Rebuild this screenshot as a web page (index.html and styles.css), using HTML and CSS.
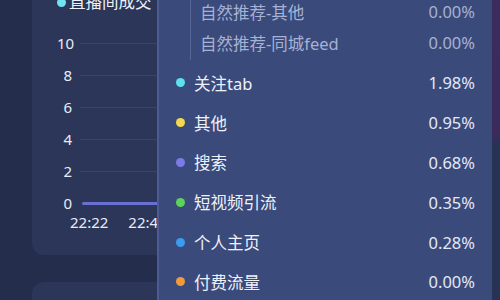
FILE: index.html
```html
<!DOCTYPE html>
<html lang="zh">
<head>
  <meta charset="UTF-8" />
  <title>流量来源</title>
  <link rel="stylesheet" href="styles.css">
</head>
<body>
  <div class="page">
    <div class="cards">
      <div class="card chart-card">
        <div class="legend"><span class="legend-dot"></span>直播间成交</div>
        <div class="chart">
          <div class="grid-row"><span class="tick">10</span><span class="line"></span></div>
          <div class="grid-row"><span class="tick">8</span><span class="line"></span></div>
          <div class="grid-row"><span class="tick">6</span><span class="line"></span></div>
          <div class="grid-row"><span class="tick">4</span><span class="line"></span></div>
          <div class="grid-row"><span class="tick">2</span><span class="line"></span></div>
          <div class="grid-row"><span class="tick">0</span><span class="line series"></span></div>
        </div>
        <div class="x-axis"><span>22:22</span><span>22:42</span></div>
      </div>
      <div class="card next-card"></div>
    </div>
    <div class="side-strip"></div>
  </div>

  <!-- tooltip over the chart -->
  <div class="tooltip">
    <div class="sub-list">
      <div class="row sub"><span class="name">自然推荐-其他</span><span class="val">0.00%</span></div>
      <div class="row sub"><span class="name">自然推荐-同城feed</span><span class="val">0.00%</span></div>
    </div>
    <div class="row"><span class="dot cyan"></span><span class="name">关注tab</span><span class="val">1.98%</span></div>
    <div class="row"><span class="dot yellow"></span><span class="name">其他</span><span class="val">0.95%</span></div>
    <div class="row"><span class="dot violet"></span><span class="name">搜索</span><span class="val">0.68%</span></div>
    <div class="row"><span class="dot green"></span><span class="name">短视频引流</span><span class="val">0.35%</span></div>
    <div class="row"><span class="dot blue"></span><span class="name">个人主页</span><span class="val">0.28%</span></div>
    <div class="row"><span class="dot orange"></span><span class="name">付费流量</span><span class="val">0.00%</span></div>
  </div>
</body>
</html>
```

FILE: styles.css
```css
* {
  box-sizing: border-box;
  margin: 0;
  padding: 0;
  font-family: 'Noto Sans', 'Noto Sans CJK SC', sans-serif;
}

body {
  background: #242e4c;
  width: 500px;
  height: 300px;
  overflow: hidden;
  position: relative;
  color: #e6ebf7;
}

.page {
  display: flex;
  justify-content: space-between;
  height: 100%;
}

.cards {
  width: 200px;
  margin-left: 32px;
  margin-top: -20px;
  display: flex;
  flex-direction: column;
  gap: 27px;
}

.card {
  background: #2b3658;
  border-radius: 12px;
  flex-shrink: 0;
}

.chart-card {
  height: 275px;
  padding: 12px 0 0 25px;
}

.next-card {
  height: 60px;
}

.legend {
  display: flex;
  align-items: center;
  font-size: 16.5px;
  line-height: 20px;
  color: #eef1fa;
}

.legend-dot {
  width: 9px;
  height: 9px;
  border-radius: 50%;
  background: #6fe3f0;
  margin-right: 3px;
}

.chart {
  margin-top: 21px;
  display: flex;
  flex-direction: column;
  gap: 12px;
}

.grid-row {
  display: flex;
  align-items: center;
  height: 20px;
}

.tick {
  width: 15px;
  text-align: right;
  font-size: 15px;
  color: #e8ecf8;
}

.line {
  flex: 1;
  height: 1px;
  margin-left: 8px;
  background: #38446a;
}

.line.series {
  height: 3px;
  margin-left: 10px;
  background: #6a6fd4;
  border-radius: 2px;
}

.x-axis {
  display: flex;
  gap: 20px;
  margin-left: 13px;
  font-size: 15px;
  line-height: 18px;
  color: #e8ecf8;
}

.side-strip {
  width: 8px;
  background: linear-gradient(#3d2b5e 0%, #3a2b5c 45%, #283255 48%, #283255 100%);
}

.tooltip {
  position: absolute;
  left: 157px;
  top: -4px;
  width: 335px;
  height: 320px;
  background: #3a4a7a;
  border-left: 2px solid #4c5c92;
  padding: 0 17px 0 17px;
}

.sub-list {
  margin-left: 14px;
  border-left: 1px solid #56659a;
  margin-bottom: 3px;
  padding-bottom: 2px;
}

.row {
  display: flex;
  align-items: center;
  height: 39.8px;
  font-size: 16.5px;
  color: #eef1fb;
}

.row.sub {
  height: 31px;
  padding-left: 9px;
  color: #a7b1d4;
}

.name {
  flex: 1;
}

.val {
  color: #e3e8f6;
}

.sub .val {
  color: #a7b1d4;
}

.dot {
  width: 9px;
  height: 9px;
  border-radius: 50%;
  margin-right: 9px;
}

.cyan { background: #5ee0ef; }
.yellow { background: #f4d94c; }
.violet { background: #7b7be8; }
.green { background: #5ed25a; }
.blue { background: #3b9cef; }
.orange { background: #f09a3a; }
```
